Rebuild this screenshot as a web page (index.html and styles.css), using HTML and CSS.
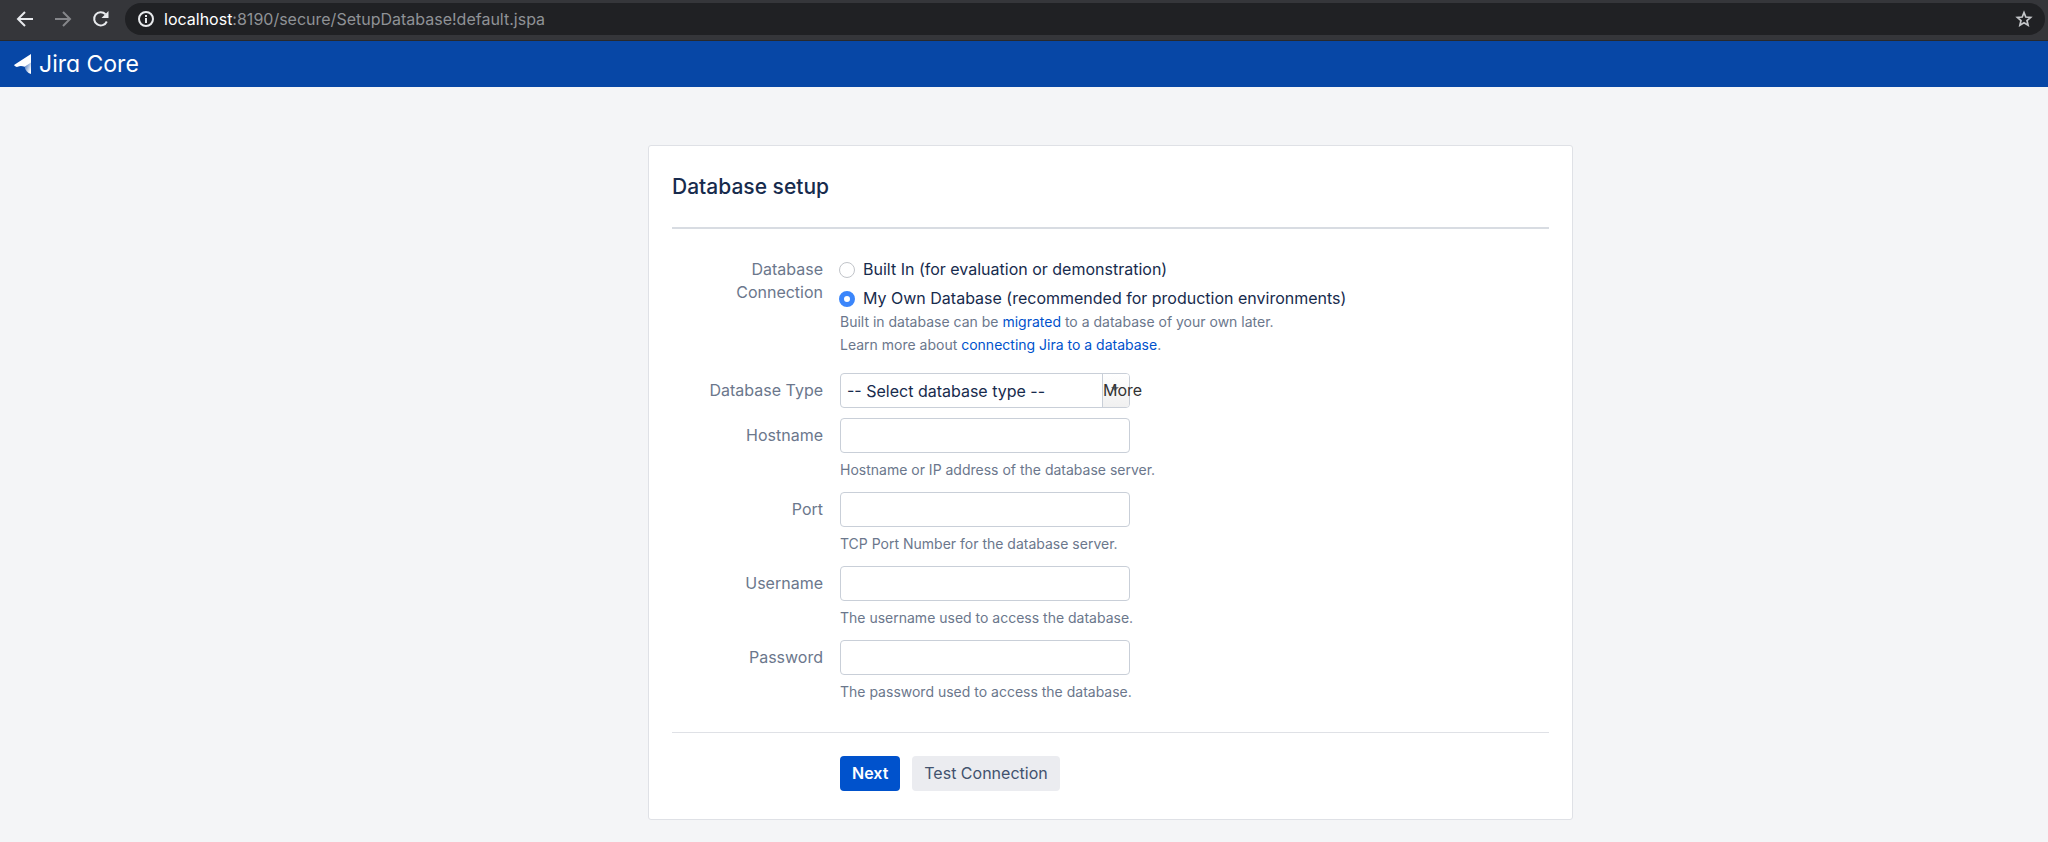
FILE: index.html
```html
<!DOCTYPE html>
<html lang="en">
<head>
<meta charset="utf-8">
<title>Database setup - Jira Core</title>
<link rel="stylesheet" href="styles.css">
</head>
<body>
<div class="toolbar">
  <button class="nav-btn" type="button" aria-label="Back">
    <svg width="18" height="18" viewBox="0 0 18 18" fill="none" stroke="#e8eaed" stroke-width="2"><path d="M17 9H3M9 2 2 9l7 7"/></svg>
  </button>
  <button class="nav-btn" type="button" aria-label="Forward">
    <svg width="18" height="18" viewBox="0 0 18 18" fill="none" stroke="#85868a" stroke-width="2"><path d="M1 9h14M9 2l7 7-7 7"/></svg>
  </button>
  <button class="nav-btn" type="button" aria-label="Reload">
    <svg width="18" height="18" viewBox="0 0 18 18"><path d="M13.500 4.200A6.600 6.600 0 1 0 14.800 11.500" fill="none" stroke="#e8eaed" stroke-width="2"/><path d="M16.500 1v7H9.500z" fill="#e8eaed"/></svg>
  </button>
  <div class="omnibox">
    <svg width="18" height="18" viewBox="0 0 18 18"><circle cx="9" cy="9" r="7" fill="none" stroke="#e8eaed" stroke-width="2"/><path d="M8 8h2v5H8zM8 5h2v2H8z" fill="#e8eaed"/></svg>
    <div class="url"><span class="host">localhost</span>:8190/secure/SetupDatabase!default.jspa</div>
    <button class="star" type="button" aria-label="Bookmark this page">
      <svg width="18" height="18" viewBox="0 0 18 18"><path d="M9 2.600l1.800 4.400 4.800.4-3.600 3.100 1.100 4.700L9 12.700l-4.100 2.500 1.100-4.700-3.600-3.100 4.800-.4z" fill="none" stroke="#c4c6c9" stroke-width="1.700"/></svg>
    </button>
  </div>
</div>
<header class="app-header">
  <a class="logo" href="#">
    <svg width="17" height="20" viewBox="0 0 17 20">
      <defs><linearGradient id="fold" x1="0.2" y1="0.2" x2="0.9" y2="0.8"><stop offset="0" stop-color="#fff" stop-opacity="0.35"/><stop offset="1" stop-color="#fff"/></linearGradient></defs>
      <path d="M17 7V20c-3.500-1-6-3.500-6.300-7.200z" fill="url(#fold)"/>
      <path d="M17 0v8.500L10.700 12.800C7.500 11.700 5.500 12 3.800 12.800 2.200 13.200.8 12.300 0 11z" fill="#fff"/>
    </svg>
    <span>Jira Core</span>
  </a>
</header>
<main class="page">
  <form class="card">
    <h1 class="title">Database setup</h1>
    <div class="fields">
      <div class="row connection" role="radiogroup" aria-labelledby="connection-label">
        <span class="label" id="connection-label">Database Connection</span>
        <div class="control">
          <label class="choice"><input class="radio" type="radio" name="connection">Built In (for evaluation or demonstration)</label>
          <label class="choice"><input class="radio" type="radio" name="connection" checked>My Own Database (recommended for production environments)</label>
          <p class="hint">Built in database can be <a href="#">migrated</a> to a database of your own later.</p>
          <p class="hint">Learn more about <a href="#">connecting Jira to a database</a>.</p>
        </div>
      </div>
      <div class="row type">
        <label class="label" for="db-type">Database Type</label>
        <div class="control">
          <div class="combo">
            <select class="select" id="db-type"><option>-- Select database type --</option></select>
            <button class="more" type="button"><span class="arrow"></span><span class="more-text">More</span></button>
          </div>
        </div>
      </div>
      <div class="row">
        <label class="label" for="host">Hostname</label>
        <div class="control"><input class="text" id="host" type="text"><p class="hint below">Hostname or IP address of the database server.</p></div>
      </div>
      <div class="row">
        <label class="label" for="port">Port</label>
        <div class="control"><input class="text" id="port" type="text"><p class="hint below">TCP Port Number for the database server.</p></div>
      </div>
      <div class="row">
        <label class="label" for="user">Username</label>
        <div class="control"><input class="text" id="user" type="text"><p class="hint below">The username used to access the database.</p></div>
      </div>
      <div class="row">
        <label class="label" for="pass">Password</label>
        <div class="control"><input class="text" id="pass" type="password"><p class="hint below">The password used to access the database.</p></div>
      </div>
    </div>
    <div class="actions">
      <button class="btn primary" type="submit">Next</button>
      <button class="btn" type="button">Test Connection</button>
    </div>
  </form>
</main>
</body>
</html>
```
FILE: styles.css
```css
* { box-sizing: border-box; }
body {
  margin: 0;
  min-height: 100vh;
  background: #f4f5f7;
  color: #172b4d;
  font: 16px/23px Inter, "Liberation Sans", sans-serif;
}
button, input, select { font: inherit; color: inherit; }
a { color: #0052cc; text-decoration: none; }
.toolbar {
  display: flex;
  align-items: center;
  height: 41px;
  padding: 0 3px 3px 6px;
  background: #35363a;
  border-bottom: 1px solid #28292c;
}
.nav-btn, .star {
  display: flex;
  justify-content: center;
  padding: 0;
  border: 0;
  background: none;
}
.nav-btn { width: 38px; }
.omnibox {
  display: flex;
  flex: 1;
  align-items: center;
  gap: 9px;
  height: 32px;
  margin-left: 5px;
  padding: 0 12px;
  border-radius: 16px;
  background: #202124;
}
.url { flex: 1; padding-top: 1px; color: #8f9296; }
.host { color: #fff; }
.app-header {
  display: flex;
  align-items: center;
  height: 46px;
  padding: 0 14px;
  background: #0747a6;
}
.logo {
  display: flex;
  align-items: center;
  gap: 8px;
  color: #fff;
  font-size: 23px;
  font-feature-settings: "cv11";
}
.page {
  display: flex;
  justify-content: center;
  padding: 58px 0 22px 173px;
}
.card {
  width: 100%;
  max-width: 925px;
  padding: 23px 23px 28px;
  border: 1px solid #dfe1e6;
  border-radius: 3px;
  background: #fff;
}
.title {
  margin: 0;
  padding-bottom: 23px;
  border-bottom: 2px solid #d8dce2;
  font-size: 21px;
  font-weight: 500;
  line-height: 35px;
}
.fields {
  padding: 29px 0 28px;
  border-bottom: 1px solid #dfe1e6;
}
.row { display: flex; gap: 17px; }
.row + .row { margin-top: 10px; }
.label {
  width: 151px;
  padding-top: 6px;
  color: #6b778c;
  text-align: right;
}
.connection .label { padding: 0 0 0 40px; }
.connection .control { display: grid; }
.row + .type { margin-top: 17px; }
.choice {
  display: flex;
  align-items: center;
  gap: 8px;
  margin-left: -1px;
}
.choice + .choice { margin-top: 6px; }
.radio {
  width: 16px;
  height: 16px;
  margin: 0;
  appearance: none;
  border: 1px solid #c1c4c9;
  border-radius: 50%;
  background: #fff;
}
.radio:checked { border: 5px solid #3b86fb; }
.hint {
  margin: 0;
  color: #6b778c;
  font-size: 14px;
}
.below { margin: 5px 0 1px; }
.text, .combo {
  display: flex;
  width: 290px;
  height: 35px;
  border: 1px solid #c9cfd8;
  border-radius: 4px;
  background: #fff;
}
.text { padding: 0 7px; }
.select {
  flex: 1;
  padding: 1px 6px 0;
  appearance: none;
  border: 0;
  background: none;
}
.more {
  position: relative;
  display: flex;
  align-items: center;
  width: 27px;
  padding: 0;
  border: 0;
  border-left: 1px solid #c9cfd8;
  border-radius: 0 3px 3px 0;
  background: linear-gradient(#fff, #f0f0f0);
  color: #333;
}
.arrow {
  position: absolute;
  top: 13px;
  left: 8px;
  border: 4px solid transparent;
  border-top-color: #6b778c;
}
.more-text { position: relative; }
.actions {
  display: flex;
  gap: 12px;
  padding: 23px 0 0 168px;
}
.btn {
  height: 35px;
  padding: 0 12px;
  border: 0;
  border-radius: 4px;
  background: #ebecf0;
  color: #42526e;
}
.primary {
  background: #0052cc;
  color: #fff;
  font-weight: 600;
}
```
